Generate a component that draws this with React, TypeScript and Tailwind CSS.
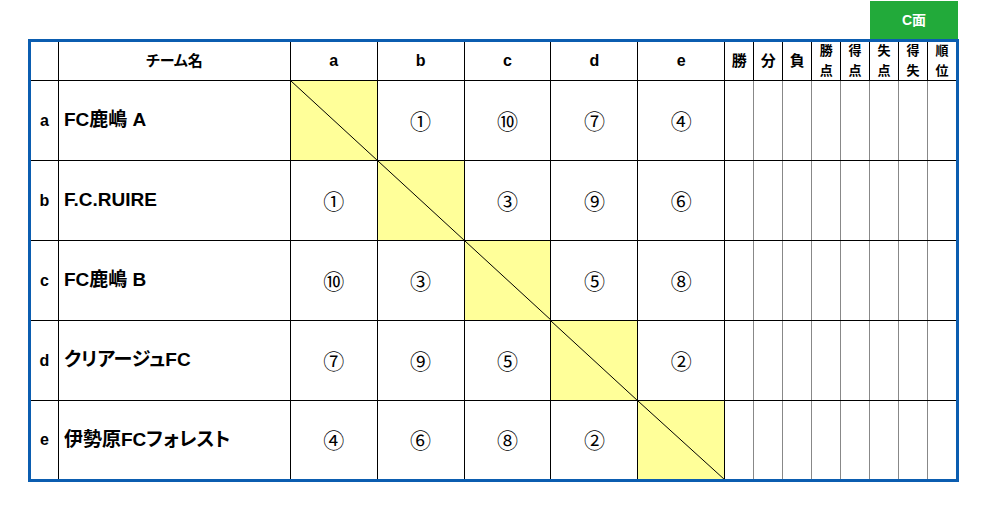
import React from "react";

const teams = [
  { k: "a", name: "FC鹿嶋 A", r: ["", "①", "⑩", "⑦", "④"] },
  { k: "b", name: "F.C.RUIRE", r: ["①", "", "③", "⑨", "⑥"] },
  { k: "c", name: "FC鹿嶋 B", r: ["⑩", "③", "", "⑤", "⑧"] },
  { k: "d", name: "クリアージュFC", r: ["⑦", "⑨", "⑤", "", "②"] },
  { k: "e", name: "伊勢原FCフォレスト", r: ["④", "⑥", "⑧", "②", ""] },
];

const smallHeads: string[][] = [["勝"], ["分"], ["負"], ["勝", "点"], ["得", "点"], ["失", "点"], ["得", "失"], ["順", "位"]];

const font = { fontFamily: '"Liberation Sans", "Noto Sans CJK JP", sans-serif' };

function Diag() {
  return (
    <svg className="absolute inset-0 w-full h-full" viewBox="0 0 100 100" preserveAspectRatio="none">
      <line x1="0" y1="0" x2="100" y2="100" stroke="#000" strokeWidth="1" vectorEffect="non-scaling-stroke" />
    </svg>
  );
}

export default function App() {
  return (
    <div className="w-[987px] h-[521px] bg-white text-black [font-feature-settings:'palt']" style={font}>
      <div className="pl-[28px] pt-[1px] w-[959px]">
        <div className="flex justify-end">
          <div className="w-[88px] h-[38px] bg-[#22aa3a] text-white font-bold text-[14px] flex items-center justify-center mr-px">
            C面
          </div>
        </div>
        <div className="border-[3px] border-[#0b5db0] w-[931px]">
          {/* header */}
          <div className="flex h-[39px] border-b border-black">
            <div className="w-[28px] border-r border-black" />
            <div className="w-[232px] border-r border-black flex items-center justify-center font-bold text-[15px]">チーム名</div>
            {["a", "b", "c", "d", "e"].map((h) => (
              <div key={h} className="w-[87px] border-r border-black flex items-center justify-center font-bold text-[16px]">
                {h}
              </div>
            ))}
            {smallHeads.map((h, i) => (
              <div
                key={i}
                className={`${i === 7 ? "w-[28px]" : "w-[29px] border-r border-black"} flex flex-col items-center justify-center font-bold ${h.length === 1 ? "text-[15px] leading-[20px]" : "text-[13px] leading-[20px]"}`}
              >
                {h.map((c, j) => (
                  <span key={j}>{c}</span>
                ))}
              </div>
            ))}
          </div>
          {teams.map((t, ri) => (
            <div key={t.k} className={`flex ${ri === 4 ? "h-[78px]" : "h-[80px] border-b border-black"}`}>
              <div className="w-[28px] border-r border-black flex items-center justify-center font-bold text-[16px]">{t.k}</div>
              <div className="w-[232px] border-r border-black flex items-center pl-[5px] font-bold text-[19px]">{t.name}</div>
              {t.r.map((v, ci) => (
                <div
                  key={ci}
                  className={`relative w-[87px] border-r border-black flex items-center justify-center text-[21px] ${ci === ri ? "bg-[#ffff99]" : ""}`}
                  style={{ fontFamily: '"Noto Sans CJK JP", sans-serif' }}
                >
                  {ci === ri ? <Diag /> : v}
                </div>
              ))}
              {smallHeads.map((_, i) => (
                <div key={i} className={i === 7 ? "w-[28px]" : "w-[29px] border-r border-[#888888]"} />
              ))}
            </div>
          ))}
        </div>
      </div>
    </div>
  );
}
